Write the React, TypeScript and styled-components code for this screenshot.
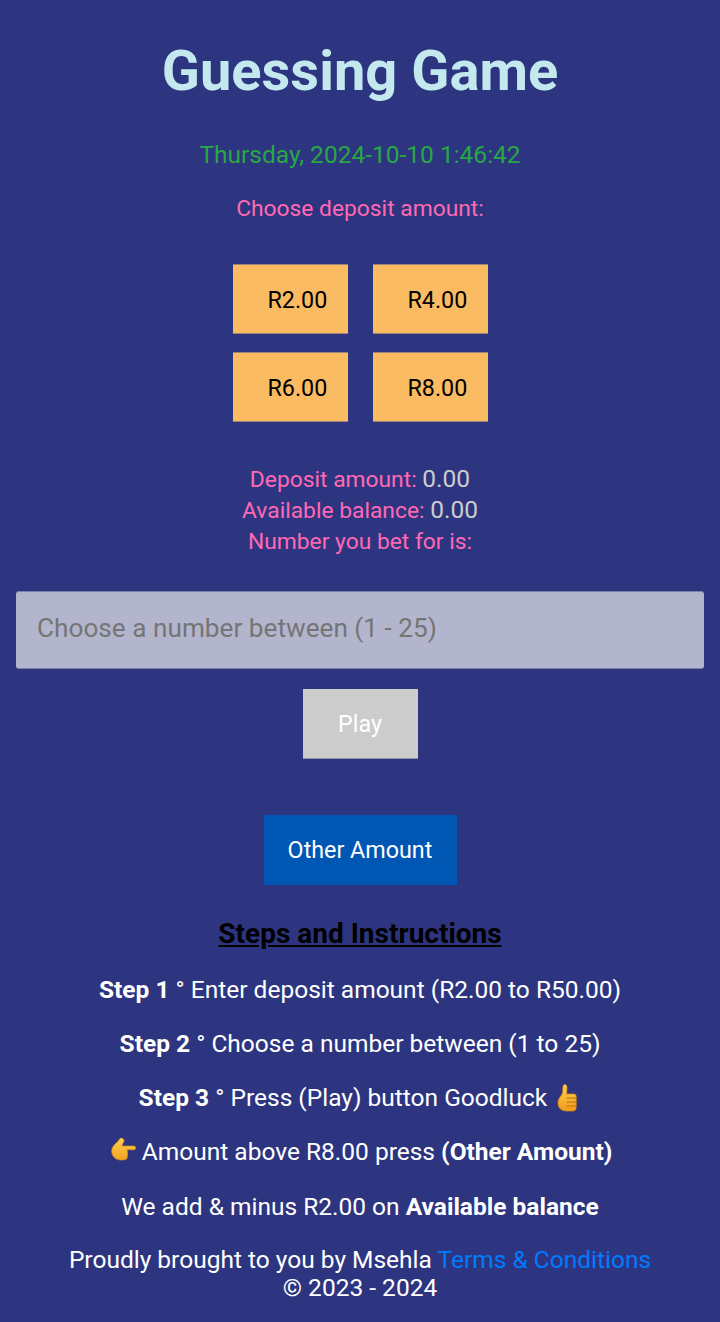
import React from 'react';
import styled, { createGlobalStyle } from 'styled-components';

const GlobalStyle = createGlobalStyle`
  html, body {
    margin: 0;
    padding: 0;
    background-color: #2d3580;
  }
  * {
    box-sizing: border-box;
  }
`;

const Page = styled.div`
  width: 720px;
  height: 1322px;
  overflow: hidden;
  padding: 36px 16px 0;
  display: flex;
  flex-direction: column;
  align-items: center;
  text-align: center;
  font-family: Roboto, sans-serif;
  font-size: 24.5px;
  line-height: 31px;
  color: #ffffff;
`;

const Title = styled.h1`
  margin: 0;
  font-size: 56px;
  line-height: 70px;
  font-weight: 700;
  color: #c3e9ee;
`;

const Clock = styled.div`
  margin-top: 33px;
  color: #28a745;
`;

const Prompt = styled.div`
  margin-top: 23px;
  color: #ff69b4;
  font-size: 22.8px;
`;

const AmountGrid = styled.div`
  margin-top: 40px;
  display: grid;
  grid-template-columns: 115px 115px;
  column-gap: 25px;
  row-gap: 18px;
`;

const AmountButton = styled.button`
  height: 70px;
  padding: 2px 0 0 35px;
  border: none;
  border-top: 1px solid #9b8379;
  border-bottom: 1px solid #9b8379;
  background-color: #fabb62;
  color: #000000;
  font: inherit;
  font-size: 23.3px;
  text-align: left;
`;

const Summary = styled.div`
  margin-top: 42px;
  color: #ff69b4;
  font-size: 22.8px;
`;

const SummaryValue = styled.span`
  color: #cccccc;
  font-size: 24.5px;
  line-height: 1;
`;

const NumberInput = styled.input`
  display: block;
  width: 688px;
  height: 78px;
  margin-top: 34px;
  padding: 0 21px 4px;
  border: none;
  border-top: 1px solid #7d80a8;
  border-bottom: 1px solid #7d80a8;
  border-radius: 3px;
  background-color: #b3b5cd;
  font: inherit;
  font-size: 26.2px;

  &::placeholder {
    color: #757575;
    opacity: 1;
  }
`;

const PlayButton = styled.button`
  width: 115px;
  height: 70px;
  margin-top: 20px;
  padding: 2px 0 0;
  border: none;
  border-bottom: 1px solid #8f90ae;
  background-color: #cccccc;
  color: #ffffff;
  font: inherit;
  font-size: 23.3px;
`;

const OtherButton = styled.button`
  width: 193px;
  height: 70px;
  margin-top: 56px;
  border: none;
  background-color: #0056b3;
  color: #ffffff;
  font: inherit;
  font-size: 23.3px;
`;

const StepsTitle = styled.h2`
  margin: 33px 0 0;
  font-size: 28px;
  line-height: 32px;
  font-weight: 700;
  color: #000000;
  text-decoration: underline;
`;

const Step = styled.p<{ $gap: number }>`
  margin: ${(p) => p.$gap}px 0 0;
  white-space: nowrap;
`;

const Footer = styled.div`
  margin-top: 24px;
  line-height: 28px;
`;

const TermsLink = styled.a`
  color: #007bff;
  text-decoration: none;
`;

const Emoji = styled.svg`
  display: inline-block;
  width: 28px;
  height: 28px;
  vertical-align: -6px;
`;

const ThumbsUp = () => (
  <Emoji viewBox="0 0 28 28" aria-hidden="true">
    <defs>
      <linearGradient id="thumbFill" x1="0" y1="0" x2="0" y2="1">
        <stop offset="0" stopColor="#fdd250" />
        <stop offset="1" stopColor="#f09a1c" />
      </linearGradient>
    </defs>
    <path
      d="M11.5.6c1.500-.2 2.500 1 2.500 2.800 0 2-.4 4-.3 6.600h7c1.700 0 2.500 1.100 2.500 2.500v11c0 2-1.200 3.500-3 3.500h-6.500c-5 0-8.700-2.700-8.700-8 0-3 1.200-5 2.800-7 1.500-1.900 2-3.500 2-6.500 0-2.800.3-4.700 1.700-4.900z"
      fill="url(#thumbFill)"
      stroke="#d98a12"
      strokeWidth="0.7"
    />
    <path
      d="M14 14h9M14 18h9M14 22h8.500"
      fill="none"
      stroke="#b9700f"
      strokeWidth="1.200"
      strokeLinecap="round"
    />
  </Emoji>
);

const PointRight = () => (
  <Emoji viewBox="0 0 28 28" aria-hidden="true">
    <defs>
      <linearGradient id="pointFill" x1="0" y1="0" x2="0" y2="1">
        <stop offset="0" stopColor="#fdd250" />
        <stop offset="1" stopColor="#f3a422" />
      </linearGradient>
    </defs>
    <path
      d="M14.500 1c1.500 0 2 1.200 1.300 2.600l-2 4.400h11.700c1.400 0 2.200.7 2.200 1.900s-.8 1.900-2.200 1.900h-6.800c.8.500.9 1.500.5 2.300.6.600.7 1.600.2 2.300.5.700.4 1.700-.2 2.400.3.900-.2 2-1.300 2.600-1 .5-2.500.6-5 .6-4.500 0-9.200-2.800-9.200-9.200 0-3 1.600-5 3.800-7 1.800-1.700 3.600-3.600 5-5.900.6-.6 1.200-.9 2-.9z"
      fill="url(#pointFill)"
      stroke="#d98a12"
      strokeWidth="0.7"
    />
  </Emoji>
);

const amounts = ['R2.00', 'R4.00', 'R6.00', 'R8.00'];

const App: React.FC = () => {
  return (
    <>
      <GlobalStyle />
      <Page>
        <Title>Guessing Game</Title>
        <Clock>Thursday, 2024-10-10 1:46:42</Clock>
        <Prompt>Choose deposit amount:</Prompt>
        <AmountGrid>
          {amounts.map((amount) => (
            <AmountButton key={amount}>{amount}</AmountButton>
          ))}
        </AmountGrid>
        <Summary>
          <div>
            Deposit amount: <SummaryValue>0.00</SummaryValue>
          </div>
          <div>
            Available balance: <SummaryValue>0.00</SummaryValue>
          </div>
          <div>Number you bet for is:</div>
        </Summary>
        <NumberInput placeholder="Choose a number between (1 - 25)" />
        <PlayButton>Play</PlayButton>
        <OtherButton>Other Amount</OtherButton>
        <StepsTitle>Steps and Instructions</StepsTitle>
        <Step $gap={24}>
          <strong>Step 1</strong> ° Enter deposit amount (R2.00 to R50.00)
        </Step>
        <Step $gap={23}>
          <strong>Step 2</strong> ° Choose a number between (1 to 25)
        </Step>
        <Step $gap={23}>
          <strong>Step 3</strong> ° Press (Play) button Goodluck <ThumbsUp />
        </Step>
        <Step $gap={23}>
          <PointRight /> Amount above R8.00 press <strong>(Other Amount)</strong>
        </Step>
        <Step $gap={24}>
          We add &amp; minus R2.00 on <strong>Available balance</strong>
        </Step>
        <Footer>
          Proudly brought to you by Msehla <TermsLink href="#">Terms &amp; Conditions</TermsLink>
          <br />© 2023 - 2024
        </Footer>
      </Page>
    </>
  );
};

export default App;
